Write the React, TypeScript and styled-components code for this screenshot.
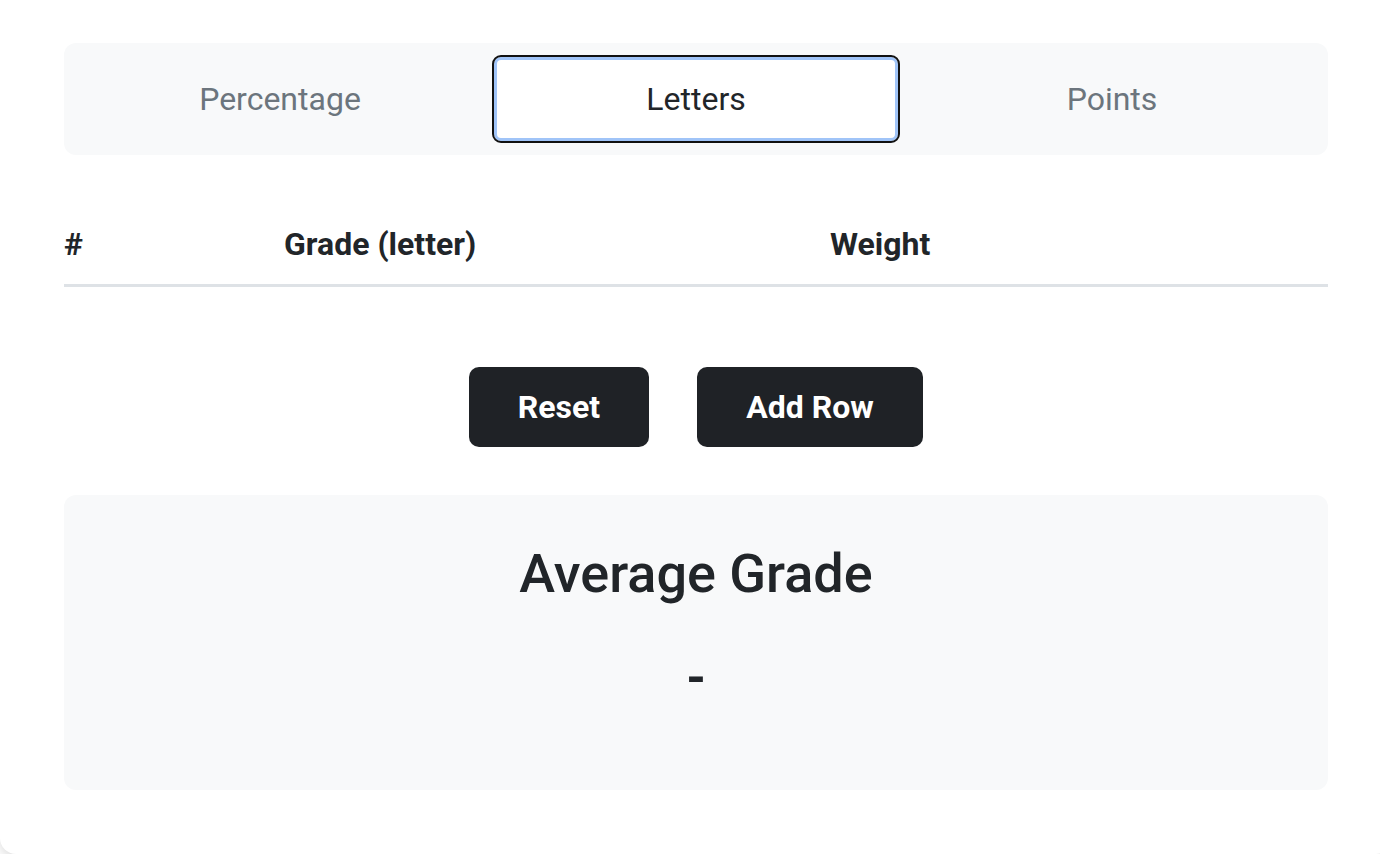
import React from "react";
import styled, { createGlobalStyle } from "styled-components";

const Global = createGlobalStyle`
  html, body { margin: 0; padding: 0; background: #ffffff; overflow: hidden; }
  body { font-family: "Roboto", "Noto Sans", sans-serif; color: #212529; }
  * { box-sizing: border-box; }
`;

const Card = styled.div`
  width: 1392px;
  margin-top: -16px;
  padding: 59px 64px 64px;
  background: #ffffff;
  border-radius: 16px;
  box-shadow: 0 4px 12px rgba(0, 0, 0, 0.14);
  display: flex;
  flex-direction: column;
`;

const Tabs = styled.div`
  display: grid;
  grid-template-columns: repeat(3, 1fr);
  gap: 8px;
  padding: 12px;
  background: #f8f9fa;
  border-radius: 12px;
`;

const Tab = styled.button<{ $active?: boolean }>`
  height: 88px;
  font-family: inherit;
  font-size: 32px;
  font-weight: 400;
  color: ${(p) => (p.$active ? "#212529" : "#6c757d")};
  background: ${(p) => (p.$active ? "#ffffff" : "transparent")};
  border: 2px solid ${(p) => (p.$active ? "#111" : "transparent")};
  border-radius: 9px;
  box-shadow: ${(p) => (p.$active ? "inset 0 0 0 3px #a0c4f8" : "none")};
  cursor: pointer;
`;

const Table = styled.div`
  margin-top: 65px;
`;

const HeadRow = styled.div`
  display: grid;
  grid-template-columns: 220px 546px 1fr;
  padding-bottom: 16px;
  border-bottom: 3px solid #dee2e6;
`;

const HeadCell = styled.div`
  font-size: 32px;
  font-weight: 700;
  line-height: 48px;
`;

const Actions = styled.div`
  display: flex;
  justify-content: center;
  gap: 48px;
  margin-top: 80px;
`;

const DarkButton = styled.button<{ $w: number }>`
  width: ${(p) => p.$w}px;
  height: 80px;
  background: #1f2226;
  color: #ffffff;
  border: none;
  border-radius: 10px;
  font-family: inherit;
  font-size: 32px;
  font-weight: 700;
  cursor: pointer;
`;

const Result = styled.div`
  margin-top: 48px;
  height: 295px;
  background: #f8f9fa;
  border-radius: 12px;
  padding-top: 48px;
  display: flex;
  flex-direction: column;
  align-items: center;
`;

const ResultTitle = styled.h2`
  margin: 0;
  font-size: 54px;
  font-weight: 500;
  line-height: 62px;
`;

const ResultValue = styled.div`
  margin-top: 42px;
  font-size: 50px;
  font-weight: 700;
  line-height: 62px;
`;

export default function App() {
  return (
    <>
      <Global />
      <Card>
        <Tabs>
          <Tab>Percentage</Tab>
          <Tab $active>Letters</Tab>
          <Tab>Points</Tab>
        </Tabs>
        <Table>
          <HeadRow>
            <HeadCell>#</HeadCell>
            <HeadCell>Grade (letter)</HeadCell>
            <HeadCell>Weight</HeadCell>
          </HeadRow>
        </Table>
        <Actions>
          <DarkButton $w={180}>Reset</DarkButton>
          <DarkButton $w={226}>Add Row</DarkButton>
        </Actions>
        <Result>
          <ResultTitle>Average Grade</ResultTitle>
          <ResultValue>-</ResultValue>
        </Result>
      </Card>
    </>
  );
}
